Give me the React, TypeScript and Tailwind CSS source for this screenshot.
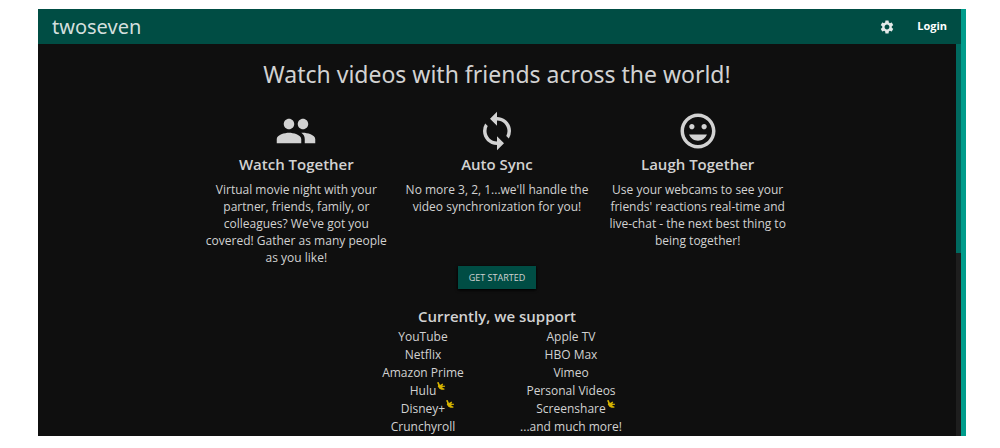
import { MdPeople, MdSync, MdInsertEmoticon, MdSettings } from "react-icons/md";

const features = [
    {
        title: "Watch Together",
        icon: MdPeople,
        text: "Virtual movie night with your partner, friends, family, or colleagues? We've got you covered! Gather as many people as you like!",
    },
    {
        title: "Auto Sync",
        icon: MdSync,
        text: "No more 3, 2, 1...we'll handle the video synchronization for you!",
    },
    {
        title: "Laugh Together",
        icon: MdInsertEmoticon,
        text: "Use your webcams to see your friends' reactions real-time and live-chat - the next best thing to being together!",
    },
];

const services = [
    [
        { name: "YouTube" },
        { name: "Netflix" },
        { name: "Amazon Prime" },
        { name: "Hulu", premium: true },
        { name: "Disney+", premium: true },
        { name: "Crunchyroll" },
    ],
    [
        { name: "Apple TV" },
        { name: "HBO Max" },
        { name: "Vimeo" },
        { name: "Personal Videos" },
        { name: "Screenshare", premium: true },
        { name: "...and much more!" },
    ],
];

function Crown() {
    return (
        <svg viewBox="0 0 8 8" className="absolute left-full top-0 ml-px size-2" fill="#d6b300" aria-hidden="true">
            <path d="M0 0.6 L1.6 0 L2.4 1.8 L3 3 L4.4 2.2 L5.4 1.4 L6.2 2.2 L5.2 3.8 L8 3.8 L8 4.8 L5.4 5 L5.6 6 L7.4 6.4 L7.4 7.8 L4.6 7.8 L2.4 6.8 L0.8 4.6 L1.2 3 Z" />
        </svg>
    );
}

function Navbar() {
    return (
        <header className="flex h-[35px] items-center justify-between bg-[#004d44] px-[14px]">
            <a href="#" className="text-[20px] leading-8 text-[#d3dfdd] font-['Noto_Sans',sans-serif]">twoseven</a>
            <nav className="flex items-center gap-[22px]">
                <button type="button" aria-label="Settings" className="text-[#e3eae9]">
                    <MdSettings size={16} />
                </button>
                <a href="#" className="text-[11px] font-bold text-white">Login</a>
            </nav>
        </header>
    );
}

export default function App() {
    return (
        <div className="bg-white pt-[9px] pb-3 pl-[38px] pr-[34px] font-['Open_Sans','Noto_Sans',sans-serif] text-[#d2d2d2]">
            <div className="border-r-[5px] border-[#009c8b] bg-[#0f0f0f]">
                <Navbar />
                <div className="flex">
                    <main className="flex-1 pt-3 text-center">
                        <h1 className="text-[23px] leading-9 font-['Noto_Sans',sans-serif]">Watch videos with friends across the world!</h1>
                        <div className="mx-auto mt-[18px] grid max-w-[602px] grid-cols-3">
                            {features.map(({ title, icon: Icon, text }) => (
                                <section key={title} className="px-2">
                                    <Icon size={42} className="mx-auto" />
                                    <h2 className="text-[15px] font-semibold leading-6">{title}</h2>
                                    <p className="mt-[5px] text-[12px] leading-[17px]">{text}</p>
                                </section>
                            ))}
                        </div>
                        <button
                            type="button"
                            className="block mx-auto h-[23px] bg-[#004d44] px-[11px] text-[9px] font-medium shadow-sm shadow-black"
                        >
                            GET STARTED
                        </button>
                        <h2 className="mt-[15px] text-[15px] font-semibold leading-6">Currently, we support</h2>
                        <div className="mx-auto grid max-w-[296px] grid-cols-2">
                            {services.map((column, i) => (
                                <ul key={i} className="text-[12px] leading-[18px]">
                                    {column.map(({ name, premium }) => (
                                        <li key={name}>
                                            <span className="relative inline-block">
                                                {name}
                                                {premium && <Crown />}
                                            </span>
                                        </li>
                                    ))}
                                </ul>
                            ))}
                        </div>
                    </main>
                    <div className="w-[5px] bg-[#1e1e1e]">
                        <div className="h-1/2 min-h-[209px] bg-[#00695f]" />
                    </div>
                </div>
            </div>
        </div>
    );
}
